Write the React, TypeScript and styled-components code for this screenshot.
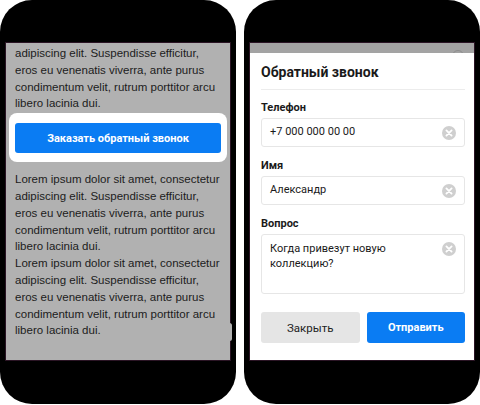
import React from "react";
import styled, { createGlobalStyle } from "styled-components";

const Global = createGlobalStyle`
  html, body { margin: 0; padding: 0; background: #fff; }
  body { width: 480px; height: 405px; overflow: hidden; }
  * { box-sizing: border-box; }
`;

const Stage = styled.div`
  display: flex;
  gap: 8px;
  width: 480px;
  height: 405px;
`;

const Phone = styled.div`
  width: 236px;
  height: 404px;
  background: #000;
  border-radius: 32px;
  padding: 43px 6px 44px;
  display: flex;
`;

const Screen = styled.div<{ $tint: string }>`
  position: relative;
  flex: 1;
  background: ${(p) => p.$tint};
  box-shadow: 0 0 0 1px #2a1424;
`;

const ScrollView = styled.div`
  height: 100%;
  overflow: hidden;
  padding: 2px 9px 0;
  font-family: "Liberation Sans", Arial, sans-serif;
  font-size: 11.5px;
  line-height: 16.8px;
  color: #1c1c1c;
`;

const Para = styled.p`
  margin: 0;
`;

const Highlight = styled.div`
  margin: 1px -6px 9px -6px;
  background: #fff;
  border-radius: 8px;
  padding: 10px 6px 9px;
`;

const PrimaryButton = styled.button<{ $h: number }>`
  display: block;
  width: 100%;
  height: ${(p) => p.$h}px;
  border: none;
  border-radius: 3px;
  background: #0a7cf3;
  color: #fff;
  font-family: Roboto, "Liberation Sans", sans-serif;
  font-weight: 700;
  font-size: 11px;
  padding: 0;
`;

const ScrollBump = styled.div`
  position: absolute;
  right: -2px;
  top: 280px;
  width: 5px;
  height: 18px;
  border-radius: 3px;
  background: #b1b1b1;
`;

const Modal = styled.div`
  position: relative;
  z-index: 1;
  margin-top: 10px;
  background: #fff;
  height: calc(100% - 10px);
  padding: 0 9px 0 11px;
  display: flex;
  flex-direction: column;
  font-family: Roboto, "Liberation Sans", sans-serif;
  color: #1a1a1a;
`;

const PeekClose = styled.div`
  position: absolute;
  right: 10px;
  top: 7px;
  width: 12px;
  height: 12px;
  border-radius: 50%;
  border: 1px solid #8c8c8c;
`;

const Header = styled.div`
  height: 37px;
  padding-top: 11px;
  border-bottom: 1px solid #ececec;
  font-size: 14px;
  font-weight: 700;
  line-height: 17px;
`;

const Field = styled.div<{ $top: number }>`
  margin-top: ${(p) => p.$top}px;
  display: flex;
  flex-direction: column;
  gap: 3px;
`;

const Label = styled.label`
  font-size: 11px;
  font-weight: 700;
  line-height: 14px;
`;

const InputBox = styled.div<{ $h: number; $multi?: boolean }>`
  height: ${(p) => p.$h}px;
  border: 1px solid #e6e6e6;
  border-radius: 3px;
  display: flex;
  align-items: ${(p) => (p.$multi ? "flex-start" : "center")};
  padding: ${(p) => (p.$multi ? "7px 8px 0 8px" : "0 8px")};
  font-size: 11px;
  line-height: 14.5px;
`;

const InputText = styled.span`
  flex: 1;
`;

const ClearIcon = () => (
  <svg width="14" height="14" viewBox="0 0 14 14" style={{ flex: "none" }}>
    <circle cx="7" cy="7" r="7" fill="#cfcfcf" />
    <path d="M4.4 4.4 L9.6 9.6 M9.6 4.4 L4.4 9.6" stroke="#fff" strokeWidth="1.8" strokeLinecap="round" />
  </svg>
);

const Actions = styled.div`
  margin-top: 18px;
  display: grid;
  grid-template-columns: 1fr 1fr;
  gap: 7px;
`;

const SecondaryButton = styled.button`
  height: 31px;
  border: none;
  border-radius: 3px;
  background: #e5e5e5;
  color: #222;
  font-family: Roboto, "Liberation Sans", sans-serif;
  font-size: 11.5px;
  padding: 0;
`;

const lorem =
  "Lorem ipsum dolor sit amet, consectetur adipiscing elit. Suspendisse efficitur, eros eu venenatis viverra, ante purus condimentum velit, rutrum porttitor arcu libero lacinia dui.";

export default function App() {
  return (
    <>
      <Global />
      <Stage>
        <Phone>
          <Screen $tint="#b1b1b1">
            <ScrollView>
              <Para>
                adipiscing elit. Suspendisse efficitur, eros eu venenatis viverra, ante purus condimentum velit,
                rutrum porttitor arcu libero lacinia dui.
              </Para>
              <Highlight>
                <PrimaryButton $h={30}>Заказать обратный звонок</PrimaryButton>
              </Highlight>
              <Para>{lorem}</Para>
              <Para>{lorem}</Para>
            </ScrollView>
            <ScrollBump />
          </Screen>
        </Phone>
        <Phone>
          <Screen $tint="#a3a3a3">
            <PeekClose />
            <Modal>
              <Header>Обратный звонок</Header>
              <Field $top={11}>
                <Label>Телефон</Label>
                <InputBox $h={29}>
                  <InputText>+7 000 000 00 00</InputText>
                  <ClearIcon />
                </InputBox>
              </Field>
              <Field $top={12}>
                <Label>Имя</Label>
                <InputBox $h={29}>
                  <InputText>Александр</InputText>
                  <ClearIcon />
                </InputBox>
              </Field>
              <Field $top={12}>
                <Label>Вопрос</Label>
                <InputBox $h={60} $multi>
                  <InputText>
                    Когда привезут новую
                    <br />
                    коллекцию?
                  </InputText>
                  <ClearIcon />
                </InputBox>
              </Field>
              <Actions>
                <SecondaryButton>Закрыть</SecondaryButton>
                <PrimaryButton $h={31}>Отправить</PrimaryButton>
              </Actions>
            </Modal>
          </Screen>
        </Phone>
      </Stage>
    </>
  );
}
